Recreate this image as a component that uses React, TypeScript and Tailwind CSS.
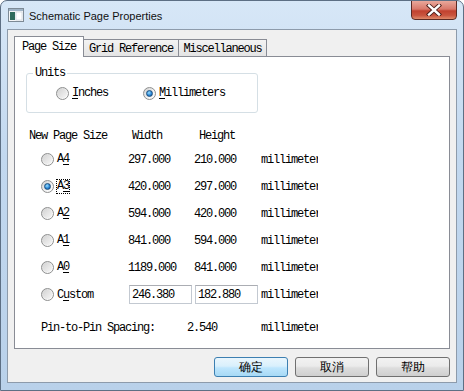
import React from "react";

const mono = "font-mono text-[12px] tracking-[-1.2px] text-black";

function Radio({ on }: { on?: boolean }) {
  return (
    <div className="w-[13px] h-[13px] shrink-0 rounded-full border border-[#8e8f8f] bg-[linear-gradient(135deg,#cfcfcf,#f4f4f4_60%,#ffffff)] flex items-center justify-center">
      {on ? (
        <div className="w-[7px] h-[7px] rounded-full bg-[radial-gradient(circle_at_40%_35%,#9be0ff,#2a86d6_55%,#0b4c8e)] border border-[#1c4f7e]" />
      ) : (
        <div className="w-[9px] h-[9px] rounded-full bg-[linear-gradient(135deg,#d4d4d4,#f6f6f6)]" />
      )}
    </div>
  );
}

function Mm() {
  return <div className="w-[57px] overflow-hidden whitespace-nowrap">millimeter</div>;
}

function SizeRow({
  pre,
  acc,
  post,
  w,
  h,
  on,
  focus,
}: {
  pre: string;
  acc: string;
  post?: string;
  w: string;
  h: string;
  on?: boolean;
  focus?: boolean;
}) {
  return (
    <div className="h-[27px] flex items-center pl-[26px]">
      <div className="w-[87px] flex items-center">
        <Radio on={on} />
        <span
          className={
            "ml-[3px] leading-[13px] " + (focus ? "outline outline-1 outline-dotted outline-black" : "")
          }
        >
          {pre}
          <u className="underline underline-offset-2">{acc}</u>
          {post}
        </span>
      </div>
      <div className="w-[66px]">{w}</div>
      <div className="w-[67px]">{h}</div>
      <Mm />
    </div>
  );
}

export default function App() {
  return (
    <div className="w-[464px] h-[391px] rounded-t-[7px] border border-[#5d6f84] bg-[linear-gradient(180deg,#d7e7f7_0%,#c2d8ef_40%,#b9d1ea_100%)] flex flex-col overflow-hidden">
      {/* title bar */}
      <div className="h-[28px] flex items-start shrink-0">
        <svg className="ml-[7px] mt-[7px]" width="16" height="14" viewBox="0 0 16 14">
          <rect x="0.5" y="0.5" width="15" height="13" fill="#f4f6f8" stroke="#7d8a96" />
          <rect x="1" y="1" width="14" height="2" fill="#9fb3c6" />
          <rect x="2" y="4" width="5" height="8" fill="#2f6b5c" />
          <rect x="8" y="4" width="6" height="8" fill="#ffffff" stroke="#b7c2cc" strokeWidth="0.5" />
        </svg>
        <div className="ml-[5px] mt-[7px] leading-[16px] text-[11px] text-[#111] font-[Arial,sans-serif]">
          Schematic Page Properties
        </div>
        <div className="ml-auto mr-[6px] -mt-px w-[46px] h-[20px] rounded-b-[4px] border border-[#5a2a24] bg-[linear-gradient(180deg,#e9a89b_0%,#d8786a_45%,#c1412f_55%,#c9553f_80%,#e08a6a_100%)] flex items-center justify-center">
          <svg width="16" height="12" viewBox="0 0 16 12">
            <path d="M3 1.5 L13 10.5 M13 1.5 L3 10.5" stroke="#4a1d18" strokeWidth="4.2" strokeLinecap="square" />
            <path d="M3 1.5 L13 10.5 M13 1.5 L3 10.5" stroke="#ffffff" strokeWidth="2.4" strokeLinecap="square" />
          </svg>
        </div>
      </div>

      {/* client area */}
      <div className="ml-[6px] w-[450px] h-[354px] border border-[#8d9bab] bg-[#f0f0f0] flex flex-col pt-[6px] px-[6px]">
        {/* tabs */}
        <div className={"h-[21px] flex items-end " + mono}>
          <div className="relative z-10 h-[21px] w-[70px] bg-white border-x border-t border-[#898c95] flex items-center justify-center">
            Page Size
          </div>
          <div className="-ml-px h-[18px] w-[96px] bg-[linear-gradient(180deg,#f3f3f3,#e3e3e3)] border-x border-t border-[#898c95] flex items-center justify-center">
            Grid Reference
          </div>
          <div className="-ml-px h-[18px] w-[89px] bg-[linear-gradient(180deg,#f3f3f3,#e3e3e3)] border-x border-t border-[#898c95] flex items-center justify-center">
            Miscellaneous
          </div>
        </div>

        {/* panel */}
        <div className={"-mt-px h-[293px] w-[436px] border border-[#898c95] bg-white flex flex-col " + mono}>
          <div className="ml-[11px] mt-[16px] w-[232px] h-[40px] rounded-[3px] border border-[#d5dfe5] relative flex items-center pl-[29px]">
            <span className="absolute left-[6px] -top-[8px] px-[2px] bg-white leading-[14px]">Units</span>
            <div className="w-[87px] flex items-center">
              <Radio />
              <span className="ml-[3px]">
                <u className="underline underline-offset-2">I</u>nches
              </span>
            </div>
            <div className="flex items-center">
              <Radio on />
              <span className="ml-[3px]">
                <u className="underline underline-offset-2">M</u>illimeters
              </span>
            </div>
          </div>

          <div className="mt-[13px] h-[20px] flex items-center pl-[14px]">
            <div className="w-[103px]">New Page Size</div>
            <div className="w-[67px]">Width</div>
            <div>Height</div>
          </div>

          <SizeRow pre="A" acc="4" w="297.000" h="210.000" />
          <SizeRow pre="A" acc="3" w="420.000" h="297.000" on focus />
          <SizeRow pre="A" acc="2" w="594.000" h="420.000" />
          <SizeRow pre="A" acc="1" w="841.000" h="594.000" />
          <SizeRow pre="A" acc="0" w="1189.000" h="841.000" />

          <div className="h-[27px] flex items-center pl-[26px]">
            <div className="w-[87px] flex items-center">
              <Radio />
              <span className="ml-[3px]">
                C<u className="underline underline-offset-2">u</u>stom
              </span>
            </div>
            <div className="w-[66px]">
              <div className="ml-[1px] w-[63px] h-[19px] border border-[#c3c9d1] border-t-[#abadb3] pl-[2px] flex items-center">
                246.380
              </div>
            </div>
            <div className="w-[67px]">
              <div className="ml-[1px] w-[63px] h-[19px] border border-[#c3c9d1] border-t-[#abadb3] pl-[2px] flex items-center">
                182.880
              </div>
            </div>
            <Mm />
          </div>

          <div className="mt-[6px] h-[27px] flex items-center pl-[26px]">
            <div className="w-[146px]">Pin-to-Pin Spacing:</div>
            <div className="w-[74px]">2.540</div>
            <Mm />
          </div>
        </div>

        {/* buttons */}
        <div className="mt-[8px] flex justify-end gap-[7px] text-[12px] text-black">
          <div className="w-[74px] h-[20px] rounded-[3px] border border-[#3c7fb1] bg-[linear-gradient(180deg,#eaf6fd_0%,#d9f0fc_45%,#bee6fd_55%,#a7d9f5_100%)] flex items-center justify-center leading-none">
            确定
          </div>
          <div className="w-[74px] h-[20px] rounded-[3px] border border-[#707070] bg-[linear-gradient(180deg,#f2f2f2_0%,#ebebeb_45%,#dddddd_55%,#cfcfcf_100%)] flex items-center justify-center leading-none">
            取消
          </div>
          <div className="w-[74px] h-[20px] rounded-[3px] border border-[#707070] bg-[linear-gradient(180deg,#f2f2f2_0%,#ebebeb_45%,#dddddd_55%,#cfcfcf_100%)] flex items-center justify-center leading-none">
            帮助
          </div>
        </div>
      </div>
    </div>
  );
}
